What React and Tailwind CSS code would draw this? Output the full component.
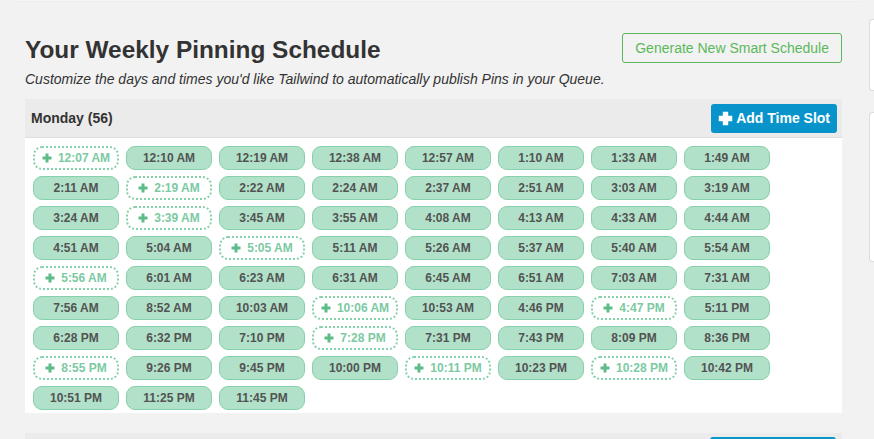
import React from "react";

const rows = [
  [["12:07 AM", 1], ["12:10 AM"], ["12:19 AM"], ["12:38 AM"], ["12:57 AM"], ["1:10 AM"], ["1:33 AM"], ["1:49 AM"]],
  [["2:11 AM"], ["2:19 AM", 1], ["2:22 AM"], ["2:24 AM"], ["2:37 AM"], ["2:51 AM"], ["3:03 AM"], ["3:19 AM"]],
  [["3:24 AM"], ["3:39 AM", 1], ["3:45 AM"], ["3:55 AM"], ["4:08 AM"], ["4:13 AM"], ["4:33 AM"], ["4:44 AM"]],
  [["4:51 AM"], ["5:04 AM"], ["5:05 AM", 1], ["5:11 AM"], ["5:26 AM"], ["5:37 AM"], ["5:40 AM"], ["5:54 AM"]],
  [["5:56 AM", 1], ["6:01 AM"], ["6:23 AM"], ["6:31 AM"], ["6:45 AM"], ["6:51 AM"], ["7:03 AM"], ["7:31 AM"]],
  [["7:56 AM"], ["8:52 AM"], ["10:03 AM"], ["10:06 AM", 1], ["10:53 AM"], ["4:46 PM"], ["4:47 PM", 1], ["5:11 PM"]],
  [["6:28 PM"], ["6:32 PM"], ["7:10 PM"], ["7:28 PM", 1], ["7:31 PM"], ["7:43 PM"], ["8:09 PM"], ["8:36 PM"]],
  [["8:55 PM", 1], ["9:26 PM"], ["9:45 PM"], ["10:00 PM"], ["10:11 PM", 1], ["10:23 PM"], ["10:28 PM", 1], ["10:42 PM"]],
  [["10:51 PM"], ["11:25 PM"], ["11:45 PM"]],
];

const slots = rows.flat();

function Plus({ className, size = 10, stroke = 3 }) {
  return (
    <svg width={size} height={size} viewBox="0 0 10 10" className={className}>
      <path d="M5 0.5V9.5M0.5 5H9.5" stroke="currentColor" strokeWidth={stroke} fill="none" />
    </svg>
  );
}

function Slot({ time, suggested }) {
  if (suggested) {
    return (
      <div className="w-[86px] h-[24px] rounded-[9px] border-2 border-dotted border-[#86d0ab] bg-white flex items-center justify-center gap-[6px] text-[12px] font-bold text-[#7ccaa3]">
        <Plus className="text-[#5dbb88]" size={10} stroke={3} />
        <span>{time}</span>
      </div>
    );
  }
  return (
    <div className="w-[86px] h-[24px] rounded-[9px] border border-[#87d0ac] bg-[#b1e1c9] flex items-center justify-center text-[12px] font-bold text-[#535353]">
      {time}
    </div>
  );
}

export default function App() {
  return (
    <div
      className="w-[874px] h-[439px] overflow-hidden bg-[#f2f2f2] relative"
      style={{ fontFamily: '"Liberation Sans", Arial, sans-serif' }}
    >
      <div className="h-[2px] ml-[15px] mr-[14px] bg-[#f6f6f6] border-b border-[#ececec]" />
      <div className="flex">
        <div className="ml-[25px] w-[817px] shrink-0">
          <div className="flex items-start justify-between pt-[31px]">
            <div>
              <h1 className="text-[24.4px] font-bold text-[#333] leading-[28px] mt-[3px]">
                Your Weekly Pinning Schedule
              </h1>
              <p className="text-[14px] italic text-[#333] leading-[18px] mt-[6px]">
                Customize the days and times you'd like Tailwind to automatically publish Pins in your Queue.
              </p>
            </div>
            <button className="h-[30px] px-[12px] border border-[#5cb85c] rounded-[3px] text-[14px] text-[#5cb85c] bg-transparent">
              Generate New Smart Schedule
            </button>
          </div>

          <div className="mt-[11px]">
            <div className="h-[39px] bg-[#ebebeb] border-b border-[#dedede] flex items-center justify-between pl-[6px] pr-[5px]">
              <span className="text-[14px] font-bold text-[#333]">Monday (56)</span>
              <button className="h-[29px] px-[7px] rounded-[3px] bg-[#0894cb] text-white text-[14px] font-bold flex items-center gap-[3px]">
                <Plus size={15} stroke={3.6} className="text-white" />
                <span>Add Time Slot</span>
              </button>
            </div>
            <div className="bg-white pl-[8px] pt-[8px] pb-[3px]">
              <div className="flex flex-wrap gap-x-[7px] gap-y-[6px] w-[750px]">
                {slots.map(([t, s]) => (
                  <Slot key={t + (s ? "s" : "")} time={t} suggested={!!s} />
                ))}
              </div>
            </div>
          </div>

          <div className="mt-[20px] h-[39px] bg-[#ebebeb] flex items-start justify-end pr-[6px] pt-[4px]">
            <div className="w-[126px] h-[29px] rounded-[3px] bg-[#0894cb]" />
          </div>
        </div>

        <div className="ml-[27px] flex-1 flex flex-col pt-[17px] gap-[21px]">
          <div className="h-[72px] bg-white border border-[#dcdcdc] rounded-l-[4px] border-r-0" />
          <div className="h-[150px] bg-white border border-[#dcdcdc] rounded-l-[4px] border-r-0" />
        </div>
      </div>
    </div>
  );
}
